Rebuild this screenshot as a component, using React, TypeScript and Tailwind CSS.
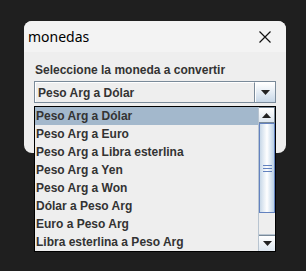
import React from 'react';

const items = [
  'Peso Arg a Dólar',
  'Peso Arg a Euro',
  'Peso Arg a Libra esterlina',
  'Peso Arg a Yen',
  'Peso Arg a Won',
  'Dólar a Peso Arg',
  'Euro a Peso Arg',
  'Libra esterlina a Peso Arg',
];

function Arrow({ up }: { up?: boolean }) {
  return (
    <svg width="9" height="5" viewBox="0 0 9 5">
      {up ? <path d="M0 5 L4.5 0 L9 5 Z" fill="#222" /> : <path d="M0 0 L9 0 L4.5 5 Z" fill="#222" />}
    </svg>
  );
}

export default function App() {
  return (
    <div className="w-[306px] h-[271px] bg-[#1f1f1f] pt-[21px] pl-[24px] relative" style={{ fontFamily: '"Liberation Sans", Arial, sans-serif' }}>
      {/* window */}
      <div className="w-[262px] h-[132px] rounded-[8px] overflow-hidden bg-[#eeeeee] flex flex-col">
        <div className="h-[31px] bg-[#f3f3f3] flex items-center justify-between shrink-0">
          <span className="pl-[4px] text-[14px] text-black leading-none" style={{ fontFamily: '"Noto Sans", "Liberation Sans", sans-serif' }}>monedas</span>
          <div className="w-[42px] h-full flex items-center justify-center">
            <svg width="12" height="12" viewBox="0 0 12 12">
              <path d="M0.5 0.5 L11.5 11.5 M11.5 0.5 L0.5 11.5" stroke="#111" strokeWidth="1.2" />
            </svg>
          </div>
        </div>
        <div className="pl-[10px] pt-[11px]">
          <div className="text-[12px] font-bold text-[#333333] leading-[15px] pl-[1px]">Seleccione la moneda a convertir</div>
          <div className="mt-[3px] w-[242px] h-[22px] flex border border-[#7a8a99]">
            <div className="flex-1 border-t border-l border-white bg-[#eeeeee] flex items-center pl-[2px] text-[12px] font-bold text-[#333333] border-r border-r-[#7a8a99]">
              Peso Arg a Dólar
            </div>
            <div className="w-[20px] flex items-center justify-center bg-gradient-to-b from-white to-[#c8d8e8] border-t border-l border-white">
              <Arrow />
            </div>
          </div>
        </div>
      </div>

      {/* popup list */}
      <div className="absolute left-[34px] top-[106px] w-[242px] h-[146px] border border-black bg-[#eeeeee] flex">
        <div className="flex-1 flex flex-col">
          {items.map((t, i) => (
            <div
              key={t}
              className={`h-[18px] flex items-center pl-[1px] text-[12px] font-bold text-[#333333] ${i === 0 ? 'bg-[#a3b8cc]' : ''}`}
            >
              {t}
            </div>
          ))}
        </div>
        <div className="w-[17px] flex flex-col bg-[#eeeeee] border-l border-[#b8c4d0]">
          <div className="h-[16px] border border-[#7a8a99] border-l-0 bg-gradient-to-b from-white to-[#dde6ef] flex items-center justify-center">
            <Arrow up />
          </div>
          <div className="h-[90px] border border-[#6382bf] bg-gradient-to-r from-[#c8d8e8] via-white to-[#b8cfe5] flex items-center justify-center">
            <div className="flex flex-col gap-[2px]">
              <div className="w-[9px] h-px bg-[#6382bf]" />
              <div className="w-[9px] h-px bg-[#6382bf]" />
              <div className="w-[9px] h-px bg-[#6382bf]" />
            </div>
          </div>
          <div className="flex-1 border-b border-[#b8c4d0]" />
          <div className="h-[16px] border-t border-[#7a8a99] bg-gradient-to-b from-white to-[#dde6ef] flex items-center justify-center">
            <Arrow />
          </div>
        </div>
      </div>
    </div>
  );
}
